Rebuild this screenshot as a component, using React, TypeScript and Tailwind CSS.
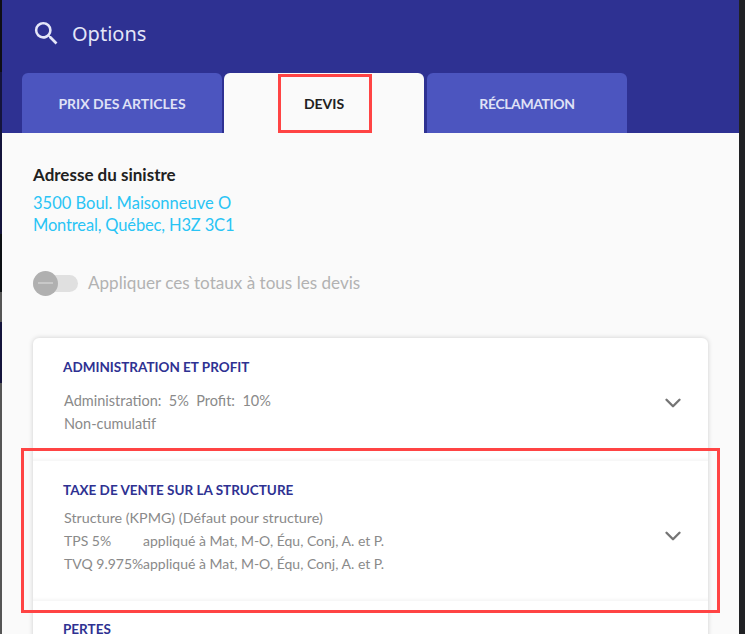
import { ChevronDown } from "lucide-react";
import { MdSearch } from "react-icons/md";

function Tab({ label, active, className = "" }: { label: string; active?: boolean; className?: string }) {
  return (
    <div
      className={`flex h-[60px] w-[200px] items-center justify-center rounded-t-[6px] text-[14px] font-bold ${
        active ? "bg-[#fafafa] text-[#212121]" : "bg-[#4c55bf] text-[#dfe1f6]"
      } ${className}`}
    >
      {label}
    </div>
  );
}

const rowClass =
  "flex items-center justify-between pl-[30px] pr-[22px] shadow-[inset_0_-5px_4px_-4px_rgba(0,0,0,0.06)]";
const titleClass = "text-[13.5px] font-bold leading-[18px] text-[#2e3192]";

export default function App() {
  return (
    <div className="relative flex h-[634px] w-[745px] overflow-hidden bg-[#202124] font-['Lato',sans-serif]">
      {/* left sliver of the window behind */}
      <div className="flex w-[2px] flex-col">
        <div className="h-[72px] bg-[#0e0e14]" />
        <div className="h-[162px] bg-[#14143c]" />
        <div className="h-[58px] bg-[#0c1014]" />
        <div className="h-[30px] bg-[#555555]" />
        <div className="h-[61px] bg-[#14143c]" />
        <div className="flex-1 bg-[#555555]" />
      </div>

      <div className="flex w-[737px] flex-col bg-[#fafafa]">
        <header className="h-[133px] bg-[#2e3192] pl-[20px]">
          <div className="flex h-[67px] items-center gap-[10px] pl-[9px] text-[#e4e6f8]">
            <MdSearch size={31} />
            <span className="font-['Noto_Sans',sans-serif] text-[20px]">Options</span>
          </div>
          <div className="mt-[6px] flex gap-[2px]">
            <Tab label="PRIX DES ARTICLES" />
            <Tab label="DEVIS" active className="mr-px" />
            <Tab label="RÉCLAMATION" className="tracking-[-0.4px]" />
          </div>
        </header>

        <main className="pl-[31px] pr-[31px] pt-[32px]">
          <h2 className="text-[17px] font-bold leading-[20px] text-[#212121]">Adresse du sinistre</h2>
          <p className="mt-[7px] text-[16.5px] leading-[22px] text-[#29c4f5]">
            3500 Boul. Maisonneuve O
            <br />
            <span className="tracking-[-0.15px]">Montreal, Québec, H3Z 3C1</span>
          </p>

          <div className="mt-[34px] flex h-[26px] items-center gap-[10px]">
            <div className="relative h-[17px] w-[45px] rounded-full bg-[#e0e0e0]">
              <div className="absolute left-0 top-[-4px] flex h-[25px] w-[25px] items-center justify-center rounded-full bg-[#b0b0b0]">
                <div className="h-[2px] w-[15px] bg-[#c8c8c8]" />
              </div>
            </div>
            <span className="text-[17.1px] text-[#b2b2b2]">Appliquer ces totaux à tous les devis</span>
          </div>

          <section className="mt-[42px] rounded-t-[6px] bg-white shadow-[0_0_5px_rgba(0,0,0,0.18)]">
            <div className={`h-[123px] ${rowClass}`}>
              <div className="self-start pt-[20px]">
                <h3 className={titleClass}>ADMINISTRATION ET PROFIT</h3>
                <div className="mt-[13px] pl-px text-[14.5px] leading-[23px] text-[#8a8a8a]">
                  <p>Administration:&nbsp; 5%&nbsp; Profit:&nbsp; 10%</p>
                  <p>Non-cumulatif</p>
                </div>
              </div>
              <ChevronDown size={26} strokeWidth={2.2} className="mt-[7px] text-[#757575]" />
            </div>
            <div className={`h-[140px] ${rowClass}`}>
              <div className="self-start pt-[20px]">
                <h3 className={titleClass}>TAXE DE VENTE SUR LA STRUCTURE</h3>
                <div className="mt-[7px] pl-px text-[14px] leading-[23px] text-[#8a8a8a]">
                  <p className="text-[14.3px]">Structure (KPMG) (Défaut pour structure)</p>
                  <div className="flex">
                    <span className="w-[79px] shrink-0 whitespace-nowrap">TPS 5%</span>
                    <span>appliqué à Mat, M-O, Équ, Conj, A. et P.</span>
                  </div>
                  <div className="flex">
                    <span className="w-[79px] shrink-0 whitespace-nowrap">TVQ 9.975%</span>
                    <span>appliqué à Mat, M-O, Équ, Conj, A. et P.</span>
                  </div>
                </div>
              </div>
              <ChevronDown size={26} strokeWidth={2.2} className="mt-[10px] text-[#757575]" />
            </div>
            <div className="pl-[30px] pt-[19px]">
              <h3 className={titleClass}>PERTES</h3>
            </div>
          </section>
        </main>
      </div>

      {/* annotations */}
      <div className="absolute left-[278px] top-[74px] h-[59px] w-[94px] border-[3px] border-[#ff4444]" />
      <div className="absolute left-[21px] top-[448px] h-[165px] w-[699px] border-[3px] border-[#ff4444]" />
    </div>
  );
}
